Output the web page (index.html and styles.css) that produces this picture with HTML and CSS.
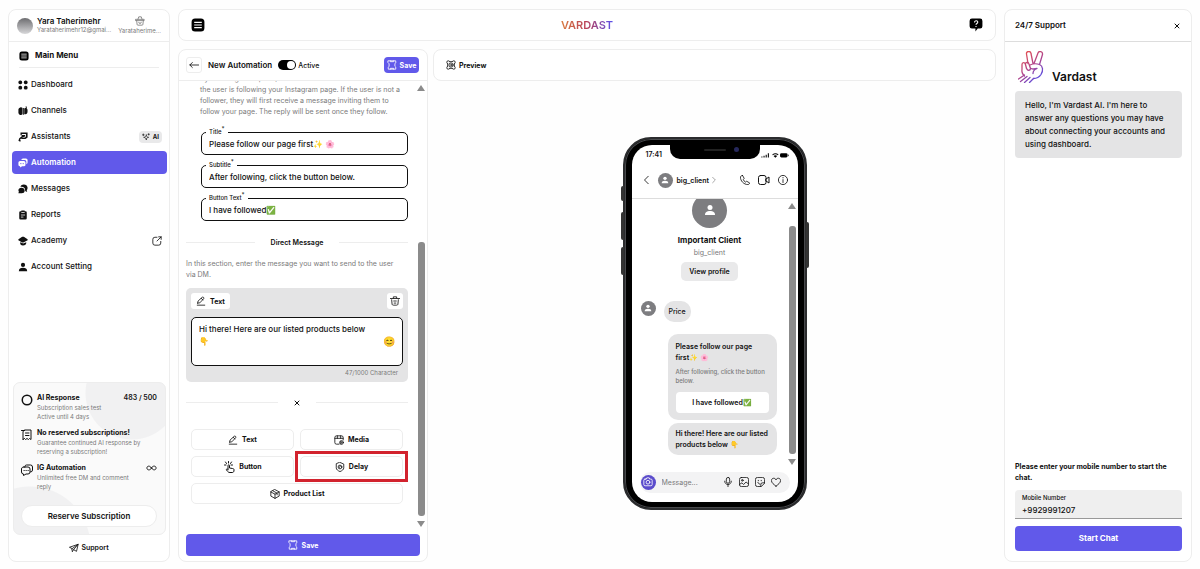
FILE: index.html
```html
<!DOCTYPE html>
<html lang="en">
<head>
  <meta charset="UTF-8">
  <meta name="viewport" content="width=device-width, initial-scale=1">
  <title>Vardast - New Automation</title>
  <link rel="stylesheet" href="styles.css">
</head>
<body>
  <!-- icons used more than once -->
  <svg class="sprite" aria-hidden="true">
    <symbol id="i-menu" viewBox="0 0 24 24"><rect x="1" y="1" width="22" height="22" rx="6" fill="#000"/><path d="M5.500 7.500h13M5.500 12h13M5.500 16.500h13" stroke="#fff" stroke-width="1.800"/></symbol>
    <symbol id="i-pen" viewBox="0 0 24 24"><path d="M4 17l1-5L15 3c2-1.500 5 1 3.500 3.500L9 16.500 4 17zM12.500 5.500l4 4M3 22h18" /></symbol>
    <symbol id="i-save" viewBox="0 0 24 24"><path d="M3 2h18v5l-2 2v6l2 2v5H3v-5l2-2V9L3 7zM8 2v2h8V2M8 22v-2h8v2"/></symbol>
    <symbol id="i-user" viewBox="0 0 24 24"><circle cx="12" cy="7" r="5"/><path d="M2 22c0-6 4-8 10-8s10 2 10 8z"/></symbol>
    <symbol id="i-close" viewBox="0 0 24 24"><path d="M4 4l16 16M20 4L4 20"/></symbol>
    <symbol id="i-chats" viewBox="0 0 24 24"><path d="M8 6V5a3 3 0 013-3h8a4 4 0 014 4v6a4 4 0 01-4 4M6 6h8a4 4 0 014 4v6a4 4 0 01-4 4h-4l-5 3v-3a4 4 0 01-4-4v-6a4 4 0 015-4zM6 13h.5M10 13h.5M14 13h.5"/></symbol>
  </svg>

  <div class="app">
    <aside class="panel sidebar">
      <header class="account">
        <span class="account-photo"></span>
        <div class="account-info">
          <strong>Yara Taherimehr</strong>
          <span>Yarataherimehr12@gmai...</span>
        </div>
        <div class="account-shop">
          <svg class="icon s10" viewBox="0 0 24 24"><path d="M2 8h20v3H2zM4 11l1 9a2 2 0 002 2h10a2 2 0 002-2l1-9M7 8l2-6h6l2 6M9 15a3 3 0 006 0"/></svg>
          <span>Yarataherime...</span>
        </div>
      </header>

      <h2 class="menu-title"><svg class="s10"><use href="#i-menu"/></svg>Main Menu</h2>

      <nav class="menu">
        <a href="#"><svg class="solid s10" viewBox="0 0 24 24"><rect x="1" y="1" width="9" height="9" rx="4"/><rect x="14" y="1" width="9" height="9" rx="4"/><rect x="1" y="14" width="9" height="9" rx="4"/><rect x="14" y="14" width="9" height="9" rx="4"/></svg>Dashboard</a>
        <a href="#"><svg class="solid s10" viewBox="0 0 24 24"><path d="M1 8a6 6 0 0110-3v15a6 6 0 01-10-3zM12 5h2v16h-2zM15 8a3 3 0 014-3l-1-4h3v5c2 1 2 3 2 6 0 5-2 8-5 8h-3z"/></svg>Channels</a>
        <a href="#"><svg class="solid s10" viewBox="0 0 24 24"><path d="M6 1h17v12l-5 4H8v-3l9-1 2-2V5H9v3H6zM9 7h8v4l-7 2-5 5 2 4-3 1-3-2 2-6 6-5z"/></svg>Assistants
          <span class="ai-tag"><svg class="icon s8" viewBox="0 0 24 24"><path d="M13 6c0 4 1 6 7 7-6 1-7 3-7 8-1-5-2-7-8-8 6-1 8-3 8-7zM4 3v5M1.500 5.500h5M20 2v4M18 4h4"/></svg>AI</span></a>
        <a href="#" class="active"><svg class="solid s10" viewBox="0 0 24 24"><path d="M8 5a4 4 0 014-4h7a4 4 0 014 4v6a4 4 0 01-3 4V9a4 4 0 00-4-4z"/><path d="M5 7h9a4 4 0 014 4v5a4 4 0 01-4 4h-4l-5 3v-3a4 4 0 01-4-4v-5a4 4 0 014-4z"/><path d="M5 13.500h2M8.500 13.500h2M12 13.500h2" stroke="#6159ea" stroke-width="2"/></svg>Automation</a>
        <a href="#"><svg class="solid s10" viewBox="0 0 24 24"><path d="M8 3c5-4 15-2 15 6 0 3-1 5-2 6l1 4-5-2c1-7-3-11-11-10 0-2 1-3 2-4z"/><path d="M8 9c5 0 8 3 8 7s-3 6-7 6H1l1-4c-3-4 1-9 6-9z"/></svg>Messages</a>
        <a href="#"><svg class="solid s10" viewBox="0 0 24 24"><path d="M8 1h8v2h2a3 3 0 013 3v14a3 3 0 01-3 3H6a3 3 0 01-3-3V6a3 3 0 013-3h2z"/><path d="M8 6h8M7 12h10M7 17h6" stroke="#fff" stroke-width="1.800"/></svg>Reports</a>
        <a href="#"><svg class="solid s10" viewBox="0 0 24 24"><path d="M10 2h4l8 5c2 1 2 3 0 4l-8 4c-2 1-3 1-5 0L2 11C0 10 0 8 2 7z"/><path d="M5 15l5 2c2 1 3 1 5 0l5-2c0 5-3 8-8 8s-7-3-7-8z"/></svg>Academy
          <svg class="icon s10 external" viewBox="0 0 24 24"><path d="M12 3H7a5 5 0 00-5 5v9a5 5 0 005 5h9a5 5 0 005-5v-4M12 12L22 2M16 2h6v6"/></svg></a>
        <a href="#"><svg class="solid s10"><use href="#i-user"/></svg>Account Setting</a>
      </nav>

      <section class="plan">
        <ul>
          <li>
            <svg class="icon ring s12" viewBox="0 0 24 24"><circle cx="12" cy="12" r="9.500"/></svg>
            <div><h3>AI Response <b>483 / 500</b></h3><p>Subscription sales test<br>Active until 4 days</p></div>
          </li>
          <li>
            <svg class="icon s12" viewBox="0 0 24 24"><path d="M4 21V6a4 4 0 014-4h12v19l-3-2-2 2-3-2-3 2-2-2zM9 8h7M9 13h7M1 3h6"/></svg>
            <div><h3>No reserved subscriptions!</h3><p>Guarantee continued AI response by<br>reserving a subscription!</p></div>
          </li>
          <li>
            <svg class="icon s12"><use href="#i-chats"/></svg>
            <div><h3>IG Automation
              <svg class="icon infinity" viewBox="0 0 24 12"><path d="M12 6c-3-6-10-5-10 0s7 6 10 0 10-5 10 0-7 6-10 0z"/></svg></h3><p>Unlimited free DM and comment<br>reply</p></div>
          </li>
        </ul>
        <button type="button" class="reserve">Reserve Subscription</button>
      </section>

      <a href="#" class="support-link"><svg class="icon s10" viewBox="0 0 24 24"><path d="M2 10L22 3l-4 17-7-4-3 5-1-7zM7 14L22 3 11 16"/></svg>Support</a>
    </aside>

    <main class="workspace">
      <header class="panel topbar">
        <button type="button" class="plain" aria-label="Menu"><svg class="s14"><use href="#i-menu"/></svg></button>
        <h1 class="brand">VARDAST</h1>
        <button type="button" class="plain" aria-label="Help">
          <svg class="s14" viewBox="0 0 24 24"><path d="M5 1h14a4 4 0 014 4v9a4 4 0 01-4 4h-4l-4 5v-5H5a4 4 0 01-4-4V5a4 4 0 014-4z"/><path d="M9.500 7.500c0-4 6-3.500 5.500 0-.3 2-3 1.800-3 4M12 13.500v1.800" fill="none" stroke="#fff" stroke-width="1.800"/></svg>
        </button>
      </header>

      <section class="panel editor">
        <header class="editor-head">
          <button type="button" class="back" aria-label="Back"><svg class="icon s10" viewBox="0 0 24 24"><path d="M23 12H2M8 6l-6 6 6 6"/></svg></button>
          <h2>New Automation</h2>
          <label class="switch"><input type="checkbox" checked><span></span>Active</label>
          <button type="button" class="primary save-small"><svg class="icon s10"><use href="#i-save"/></svg>Save</button>
        </header>

        <div class="editor-scroll">
          <div class="editor-content">
            <div class="follow">
              <p class="hint">By enabling this option, Vardast will check if<br>the user is following your Instagram page. If the user is not a<br>follower, they will first receive a message inviting them to<br>follow your page. The reply will be sent once they follow.</p>
              <div class="field"><label for="title">Title<sup>*</sup></label><input id="title" type="text" value="Please follow our page first✨ 🌸"></div>
              <div class="field"><label for="subtitle">Subtitle<sup>*</sup></label><input id="subtitle" type="text" value="After following, click the button below."></div>
              <div class="field"><label for="button-text">Button Text<sup>*</sup></label><input id="button-text" type="text" value="I have followed✅"></div>
            </div>

            <h3 class="divider">Direct Message</h3>
            <p class="hint">In this section, enter the message you want to send to the user<br>via DM.</p>

            <div class="message">
              <div class="message-head">
                <span class="tag"><svg class="icon s10"><use href="#i-pen"/></svg>Text</span>
                <button type="button" class="tag delete" aria-label="Delete"><svg class="icon s10" viewBox="0 0 24 24"><path d="M1 6h22M8 5V2h8v3M4 9l1 11a3 3 0 003 2h8a3 3 0 003-2l1-11M9 12h6M10 17h4"/></svg></button>
              </div>
              <div class="message-box">
                <textarea aria-label="Message text">Hi there! Here are our listed products below 👇</textarea>
                <button type="button" class="plain emoji" aria-label="Emoji">😊</button>
              </div>
              <p class="counter">47/1000 Character</p>
            </div>

            <div class="divider"><button type="button" class="plain" aria-label="Close"><svg class="icon bold s6"><use href="#i-close"/></svg></button></div>

            <div class="blocks">
              <button type="button"><svg class="icon s10"><use href="#i-pen"/></svg>Text</button>
              <button type="button"><svg class="icon s10" viewBox="0 0 24 24"><path d="M12 22H6a4 4 0 01-4-4V6a4 4 0 014-4h12a4 4 0 014 4v6M2 8h20M8 2v6M16 2v6"/><circle cx="18" cy="18" r="4.500"/><path d="M17 16l3 2-3 2z"/></svg>Media</button>
              <button type="button"><svg class="icon s12" viewBox="0 0 24 24"><path d="M10 17V9c0-2 3-2 3 0v5l6 1c2 0 3 1 3 3 0 3-1 5-3 5h-5c-3 0-4-1-7-5-1-2 1-3 3-1M11 1v3M3 8h3M5 2l2 3M17 2l-2 3M16 8h3"/></svg>Button</button>
              <button type="button" class="highlight"><svg class="icon s10" viewBox="0 0 24 24"><path d="M12 1l9 4v9c0 4-4 7-9 9-5-2-9-5-9-9V5z"/><circle cx="12" cy="12" r="4.500"/><path d="M12 10v2l-1 1"/></svg>Delay</button>
              <button type="button" class="wide"><svg class="icon s10" viewBox="0 0 24 24"><path d="M12 1.500l10 5.500v10l-10 5.500L2 17V7zM2 7l10 5.500L22 7M12 12.500v10M7 4.500l10 5.500v4"/></svg>Product List</button>
            </div>
          </div>
          <div class="scrollbar"><i class="up"></i><span></span><i class="down"></i></div>
        </div>

        <button type="button" class="primary save-wide"><svg class="icon s10"><use href="#i-save"/></svg>Save</button>
      </section>

      <section class="preview">
        <header class="panel preview-head">
          <svg class="icon s10" viewBox="0 0 24 24"><circle cx="12" cy="12" r="5"/><circle cx="12" cy="12" r="1"/><path d="M9 4C8 2 7 2 5 2a3 3 0 00-3 3c0 2 0 3 2 4M15 4c1-2 2-2 4-2a3 3 0 013 3c0 2 0 3-2 4M9 20c-1 2-2 2-4 2a3 3 0 01-3-3c0-2 0-3 2-4M15 20c1 2 2 2 4 2a3 3 0 003-3c0-2 0-3-2-4M4 9v6M20 9v6M9 4h6M9 20h6"/></svg>
          Preview
        </header>
        <div class="stage">
          <div class="phone">
            <i class="key key-1"></i><i class="key key-2"></i><i class="key key-3"></i><i class="key key-4"></i>
            <div class="notch"><span></span><i></i></div>
            <div class="screen">
              <div class="status">
                <time>17:41</time>
                <svg viewBox="0 0 78 20"><path d="M1 17v-3h3v3zM7 17v-5h3v5zM13 17V9h3v8zM19 17V5h3v12zM31 9c6-5 13-5 18 0l-2 2c-4-4-10-4-14 0zM35 13c3-3 7-3 10 0l-5 5z"/><rect x="53" y="5" width="21" height="12" rx="4"/><path d="M75 8c3 1 3 5 0 6z"/></svg>
              </div>
              <div class="chat-head">
                <svg class="icon s10" viewBox="0 0 24 24"><path d="M15 3l-9 9 9 9"/></svg>
                <span class="avatar"><svg class="s8"><use href="#i-user"/></svg></span>
                <strong>big_client</strong>
                <svg class="icon thin s8" viewBox="0 0 24 24"><path d="M8 4l8 8-8 8"/></svg>
                <div class="chat-actions">
                  <svg class="icon s10" viewBox="0 0 24 24"><path d="M6 1l4 7-2 3c1 3 3 5 5 6l3-2 7 4c0 2-2 4-4 4C9 23 1 14 1 5c0-2 3-4 5-4z"/></svg>
                  <svg class="icon s12" viewBox="0 0 24 24"><rect x="1" y="3" width="15" height="18" rx="4"/><path d="M16 10l6-4v12l-6-4z"/></svg>
                  <svg class="icon s10" viewBox="0 0 24 24"><circle cx="12" cy="12" r="11"/><path d="M12 6v1M12 11v7"/></svg>
                </div>
              </div>
              <div class="chat">
                <div class="chat-body">
                  <div class="profile">
                    <span class="avatar big"><svg class="s12"><use href="#i-user"/></svg></span>
                    <strong>Important Client</strong>
                    <span>big_client</span>
                    <button type="button">View profile</button>
                  </div>
                  <div class="incoming"><span class="avatar"><svg class="s8"><use href="#i-user"/></svg></span><p class="bubble">Price</p></div>
                  <div class="outgoing">
                    <div class="bubble">
                      <b>Please follow our page first✨ 🌸</b>
                      <small>After following, click the button below.</small>
                      <button type="button">I have followed✅</button>
                    </div>
                    <div class="bubble"><b>Hi there! Here are our listed products below 👇</b></div>
                  </div>
                </div>
                <div class="scrollbar"><i class="up"></i><span></span><i class="down"></i></div>
              </div>
              <div class="composer">
                <span class="camera"><svg class="icon s10" viewBox="0 0 24 24"><path d="M5 5h3l1-3h6l1 3h3a3 3 0 013 3v10a3 3 0 01-3 3H5a3 3 0 01-3-3V8a3 3 0 013-3z"/><circle cx="12" cy="12.500" r="4.500"/></svg></span>
                <input type="text" placeholder="Message..." aria-label="Message">
                <svg class="icon s10" viewBox="0 0 24 24"><rect x="8" y="1" width="8" height="14" rx="4"/><path d="M4 10c0 11 16 11 16 0M12 18v5"/></svg>
                <svg class="icon s10" viewBox="0 0 24 24"><rect x="1" y="1" width="22" height="22" rx="5"/><circle cx="8" cy="8" r="2"/><path d="M1 18l6-4 4 4 6-6 6 5"/></svg>
                <svg class="icon s10" viewBox="0 0 24 24"><path d="M14 23H6a5 5 0 01-5-5V6a5 5 0 015-5h12a5 5 0 015 5v8zM14 23v-5a4 4 0 014-4h5M7 13c1 3 3 4 5 4M8 8v1M15 8v1"/></svg>
                <svg class="icon s10" viewBox="0 0 24 24"><path d="M12 22C7 18 1 14 1 8.500 1 2 10 1 12 7c2-6 11-5 11 1.500 0 5.500-6 9.500-11 13.500z"/></svg>
              </div>
            </div>
          </div>
        </div>
      </section>
    </main>

    <aside class="panel support">
      <header><h2>24/7 Support</h2><button type="button" class="plain" aria-label="Close"><svg class="icon bold s6"><use href="#i-close"/></svg></button></header>
      <div class="bot">
        <svg viewBox="0 0 52 64">
          <defs><linearGradient id="hand" gradientUnits="userSpaceOnUse" x1="4" y1="8" x2="48" y2="56"><stop offset="0" stop-color="#e8504a"/><stop offset=".5" stop-color="#b0448c"/><stop offset="1" stop-color="#4a4ff0"/></linearGradient></defs>
          <g fill="none" stroke="url(#hand)" stroke-width="2.600" stroke-linecap="round" stroke-linejoin="round">
            <path d="M20 25L17 6c-1-6 8-7 9-1l4 20M32 25l8-21c2-5 10-3 9 3l-6 20"/>
            <path d="M13 50C8 46 7 42 8 36v-9c0-5 6-5 7 0l2 8M15 27c-1-5 6-6 7-1l3 9c0 4-6 5-7 1"/>
            <path d="M24 28c5-3 14-3 19-1 7 3 8 12 3 20-4 6-9 8-15 8M26 35c4 2 8 1 12 0-5 2-8 5-8 10"/>
            <path d="M13 48L1 56M18 51L5 61M24 53L13 63M31 55l-8 8"/>
          </g>
        </svg>
        <strong>Vardast</strong>
      </div>
      <p class="greeting">Hello, I'm Vardast AI. I'm here to answer any questions you may have about connecting your accounts and using dashboard.</p>
      <form class="phone-form">
        <p>Please enter your mobile number to start the chat.</p>
        <div class="mobile"><label for="mobile">Mobile Number</label><input id="mobile" type="tel" value="+9929991207"></div>
        <button type="button" class="primary">Start Chat</button>
      </form>
    </aside>
  </div>
</body>
</html>
```

FILE: styles.css
```css
* {
  box-sizing: border-box;
}
:root {
  --primary: #6159ea;
  --line: #ededed;
  --muted: #7a7a7a;
  --bubble: #e4e4e5;
}
body {
  margin: 0;
  background: #fefefe;
  color: #111;
  font-family: Inter, "Liberation Sans", sans-serif;
  font-size: 8px;
  line-height: 11px;
}
h1, h2, h3, p, ul {
  margin: 0;
  padding: 0;
}
h2, h3, strong, b {
  font-weight: 600;
}
ul {
  list-style: none;
}
a {
  color: inherit;
  text-decoration: none;
}
button, input, textarea {
  font: inherit;
  color: inherit;
  margin: 0;
}
button {
  display: flex;
  align-items: center;
  justify-content: center;
  gap: 4px;
  padding: 0;
  border: none;
  background: #fff;
  font-weight: 600;
  cursor: pointer;
}
svg {
  flex: none;
  display: block;
}
.sprite {
  position: absolute;
  width: 0;
  height: 0;
}
.icon {
  fill: none;
  stroke: currentColor;
  stroke-width: 2;
  stroke-linecap: round;
  stroke-linejoin: round;
}
.bold {
  stroke-width: 4;
}
.solid {
  fill: currentColor;
}
.s6 { width: 6px; height: 6px; }
.s8 { width: 8px; height: 8px; }
.s10 { width: 10px; height: 10px; }
.s12 { width: 12px; height: 12px; }
.s14 { width: 14px; height: 14px; }
.plain {
  background: none;
}
.primary {
  background: var(--primary);
  color: #fff;
  border-radius: 4px;
}

/* page frame */
.app {
  display: grid;
  grid-template-columns: 162px 1fr 188px;
  gap: 8px;
  height: 100vh;
  padding: 9px 8px 7px;
}
.panel {
  background: #fff;
  border: 1px solid var(--line);
  border-radius: 8px;
}
.workspace {
  display: grid;
  grid-template-columns: 250px 1fr;
  grid-template-rows: 32px 1fr;
  gap: 8px 5px;
  min-height: 0;
}

/* sidebar */
.sidebar {
  display: flex;
  flex-direction: column;
}
.account {
  display: flex;
  align-items: center;
  gap: 4px;
  height: 32px;
  padding: 0 8px;
  border-bottom: 1px solid var(--line);
}
.account-photo {
  flex: none;
  width: 16px;
  height: 16px;
  border-radius: 50%;
  background: linear-gradient(#6d6d70, #d8d8da);
}
.account-info, .account-shop {
  display: flex;
  flex-direction: column;
  font-size: 6px;
  line-height: 8px;
  color: var(--muted);
}
.account-info strong {
  font-size: 8px;
  line-height: 9px;
  color: #111;
}
.account-shop {
  align-items: center;
  gap: 1px;
  margin-left: auto;
}
.menu-title {
  display: flex;
  align-items: center;
  gap: 6px;
  height: 26px;
  margin: 0 10px;
  padding-top: 2px;
  font-size: 8px;
  font-weight: 700;
  border-bottom: 1px solid var(--line);
}
.menu {
  display: flex;
  flex-direction: column;
  gap: 3px;
  margin: 5px 2px 0 3px;
}
.menu a {
  display: flex;
  align-items: center;
  gap: 3px;
  height: 23px;
  padding: 0 5px 0 6px;
  border-radius: 4px;
  font-weight: 500;
}
.menu .active {
  background: var(--primary);
  color: #fff;
  font-weight: 600;
}
.ai-tag {
  display: flex;
  align-items: center;
  gap: 3px;
  margin-left: auto;
  padding: 0 3px;
  border-radius: 4px;
  background: #e9e9ea;
  font-size: 6px;
  line-height: 12px;
  font-weight: 700;
}
.external {
  margin-left: auto;
}
.plan {
  margin: auto 3px 7px 4px;
  padding: 9px 8px 7px 7px;
  border: 1px solid var(--line);
  border-radius: 7px;
  background:
    radial-gradient(circle at 118px 10px, #f1f1f2 46px, transparent 47px),
    radial-gradient(circle at 16px 164px, #f1f1f2 60px, transparent 61px),
    #fafafa;
}
.plan ul {
  display: flex;
  flex-direction: column;
  gap: 6px;
  margin-bottom: 14px;
}
.plan li {
  display: flex;
  gap: 4px;
}
.plan li > svg {
  margin-top: 2px;
}
.plan li > div {
  flex: 1;
}
.plan h3 {
  display: flex;
  justify-content: space-between;
  align-items: center;
  font-size: 7px;
  font-weight: 700;
}
.plan p {
  font-size: 6px;
  line-height: 9px;
  color: var(--muted);
}
.ring {
  stroke-width: 3;
}
.infinity {
  width: 11px;
  height: 6px;
}
.reserve {
  width: 100%;
  height: 22px;
  border: 1px solid var(--line);
  border-radius: 11px;
}
.support-link {
  display: flex;
  align-items: center;
  justify-content: center;
  gap: 2px;
  margin-bottom: 8px;
  font-size: 7px;
  font-weight: 600;
}

/* top bar */
.topbar {
  grid-column: 1 / -1;
  display: flex;
  align-items: center;
  justify-content: space-between;
  padding: 0 12px;
}
.brand {
  font-size: 11px;
  font-weight: 600;
  background: linear-gradient(90deg, #d97b3f, #b8405a 50%, #5850ee);
  -webkit-background-clip: text;
  background-clip: text;
  color: transparent;
}

/* automation editor */
.editor {
  display: flex;
  flex-direction: column;
  min-height: 0;
}
.editor-head {
  display: flex;
  align-items: center;
  gap: 6px;
  height: 31px;
  padding: 0 8px 0 7px;
  border-bottom: 1px solid var(--line);
}
.editor-head h2 {
  font-size: 8px;
}
.back {
  width: 16px;
  height: 16px;
  border: 1px solid var(--line);
  border-radius: 3px;
}
.switch {
  display: flex;
  align-items: center;
  gap: 2px;
  font-size: 7px;
  font-weight: 500;
}
.switch input {
  position: absolute;
  opacity: 0;
}
.switch span {
  width: 18px;
  height: 10px;
  padding: 1px;
  border-radius: 5px;
  background: #bbb;
}
.switch span::after {
  content: "";
  display: block;
  width: 8px;
  height: 8px;
  border-radius: 50%;
  background: #fff;
}
.switch input:checked + span {
  background: #000;
}
.switch input:checked + span::after {
  margin-left: auto;
}
.save-small {
  width: 35px;
  height: 16px;
  margin-left: auto;
  gap: 3px;
  font-size: 7px;
  font-weight: 700;
}
.editor-scroll {
  flex: 1;
  display: flex;
  min-height: 0;
  overflow: hidden;
}
.editor-content {
  flex: 1;
  padding-left: 7px;
  margin-top: -8px;
}
.hint {
  font-size: 7px;
  color: var(--muted);
}
.follow {
  display: flex;
  flex-direction: column;
  gap: 10px;
  padding: 0 0 1px 14px;
}
.follow .hint {
  margin-bottom: 5px;
}
.field {
  position: relative;
  margin-left: 1px;
}
.field label {
  position: absolute;
  top: -5px;
  left: 5px;
  padding: 0 3px;
  background: #fff;
  font-size: 6px;
  line-height: 9px;
  font-weight: 500;
}
.field sup {
  line-height: 0;
  font-size: 6px;
}
.field input {
  display: block;
  width: 100%;
  height: 23px;
  padding: 0 7px;
  border: 1px solid #111;
  border-radius: 5px;
  background: none;
  font-weight: 500;
}
.divider {
  display: flex;
  align-items: center;
  gap: 16px;
  height: 11px;
  margin: 15px 0 10px;
  font-size: 7px;
}
.divider::before, .divider::after {
  content: "";
  flex: 1;
  border-top: 1px solid var(--line);
}
.message {
  margin-top: 8px;
  padding: 5px 5px 4px;
  border-radius: 5px;
  background: var(--bubble);
}
.message-head {
  display: flex;
  justify-content: space-between;
}
.tag {
  display: flex;
  align-items: center;
  gap: 4px;
  height: 16px;
  padding: 0 5px;
  border-radius: 3px;
  background: #fff;
  font-size: 7px;
  font-weight: 700;
}
.delete {
  padding: 0 3px;
}
.message-box {
  position: relative;
  margin: 8px 0 1px;
}
.message-box textarea {
  display: block;
  width: 100%;
  height: 49px;
  padding: 5px 32px 5px 7px;
  border: 1px solid #111;
  border-radius: 5px;
  background: #fff;
  line-height: 12px;
  font-weight: 500;
  resize: none;
  overflow: hidden;
}
.emoji {
  position: absolute;
  right: 8px;
  top: 19px;
  font-size: 10px;
}
.counter {
  padding-right: 5px;
  text-align: right;
  font-size: 6px;
  color: var(--muted);
}
.blocks {
  display: grid;
  grid-template-columns: 1fr 1fr;
  gap: 6px;
  padding: 11px 5px 0;
}
.blocks button {
  position: relative;
  height: 21px;
  border: 1px solid var(--line);
  border-radius: 5px;
  font-size: 7px;
  font-weight: 700;
}
.blocks .wide {
  grid-column: 1 / -1;
}
.blocks .highlight::after {
  content: "";
  position: absolute;
  inset: -6px;
  border: 3px solid #d2232e;
}
.save-wide {
  height: 22px;
  margin: 5px 7px;
  font-size: 7px;
  font-weight: 700;
}
.scrollbar {
  flex: none;
  display: flex;
  flex-direction: column;
  align-items: center;
  width: 7px;
}
.scrollbar i {
  border: 4px solid transparent;
}
.scrollbar .up {
  border-top: 0;
  border-bottom: 6px solid #8b8b8b;
}
.scrollbar .down {
  border-bottom: 0;
  border-top: 6px solid #8b8b8b;
}
.scrollbar span {
  width: 7px;
  border-radius: 3px;
  background: #8b8b8b;
}
.editor .scrollbar {
  width: 8px;
  margin: 4px 2px 2px 9px;
}
.editor .scrollbar span {
  flex: 1;
  margin: 151px 0 5px;
}

/* preview */
.preview {
  display: flex;
  flex-direction: column;
  min-height: 0;
}
.preview-head {
  display: flex;
  align-items: center;
  gap: 3px;
  height: 32px;
  padding: 0 12px;
  font-size: 7px;
  font-weight: 700;
}
.stage {
  flex: 1;
  display: flex;
  align-items: center;
  justify-content: center;
  padding-top: 3px;
}
.phone {
  position: relative;
  width: 184px;
  height: 373px;
  padding: 6px 7px;
  border: 2px solid #2b2c2e;
  border-radius: 28px;
  background: #000;
  box-shadow: inset 0 0 0 1px #48494c;
}
.key {
  position: absolute;
  left: -4px;
  width: 3px;
  border-radius: 2px 0 0 2px;
  background: #333;
}
.key-1 { top: 47px; height: 15px; }
.key-2 { top: 73px; height: 28px; }
.key-3 { top: 108px; height: 28px; }
.key-4 {
  left: auto;
  right: -4px;
  top: 83px;
  height: 46px;
  border-radius: 0 2px 2px 0;
}
.notch {
  position: absolute;
  top: 2px;
  left: 50%;
  display: flex;
  align-items: center;
  gap: 8px;
  width: 90px;
  height: 18px;
  padding: 0 0 0 34px;
  margin-left: -45px;
  border-radius: 0 0 10px 10px;
  background: #000;
}
.notch span {
  width: 22px;
  height: 2px;
  border-radius: 1px;
  background: #222;
}
.notch i {
  width: 5px;
  height: 5px;
  border-radius: 50%;
  background: #26285c;
}
.screen {
  display: flex;
  flex-direction: column;
  height: 100%;
  border-radius: 20px;
  background: #fff;
  overflow: hidden;
}
.status {
  display: flex;
  align-items: center;
  justify-content: space-between;
  height: 18px;
  padding: 2px 9px 0 14px;
  font-size: 7px;
  font-weight: 600;
}
.status svg {
  width: 28px;
  height: 8px;
}
.chat-head {
  display: flex;
  align-items: center;
  gap: 4px;
  height: 36px;
  padding: 0 10px;
  border-bottom: 1px solid #ddd;
}
.chat-head strong {
  font-size: 7px;
}
.chat-head .avatar {
  margin-left: 2px;
}
.thin {
  color: var(--muted);
  margin-left: -3px;
}
.chat-actions {
  display: flex;
  align-items: center;
  gap: 8px;
  margin-left: auto;
}
.avatar {
  flex: none;
  display: flex;
  align-items: center;
  justify-content: center;
  width: 15px;
  height: 15px;
  border-radius: 50%;
  background: #7d7d80;
  fill: #fff;
}
.avatar.big {
  width: 35px;
  height: 35px;
}
.chat {
  flex: 1;
  display: flex;
  min-height: 0;
  overflow: hidden;
}
.chat-body {
  flex: 1;
  padding: 0 10px 0 9px;
  margin-top: -6px;
}
.profile {
  display: flex;
  flex-direction: column;
  align-items: center;
  font-size: 7px;
  color: var(--muted);
}
.profile strong {
  margin-top: 6px;
  font-size: 8px;
  line-height: 13px;
  font-weight: 700;
  color: #111;
}
.profile button {
  width: 57px;
  height: 19px;
  margin: 4px 0 20px;
  border-radius: 5px;
  background: #e9e9ea;
  font-size: 7px;
  color: #111;
}
.incoming {
  display: flex;
  gap: 8px;
}
.bubble {
  border-radius: 10px;
  background: var(--bubble);
  font-size: 7px;
  font-weight: 500;
}
.incoming .bubble {
  padding: 5px;
}
.outgoing {
  display: flex;
  flex-direction: column;
  gap: 3px;
  margin: 12px 2px 0 27px;
}
.outgoing .bubble {
  padding: 7px 8px;
}
.outgoing .bubble + .bubble {
  padding: 5px 6px 5px 8px;
}
.outgoing b {
  display: block;
}
.outgoing small {
  display: block;
  margin: 4px 0 7px;
  font-size: 6px;
  line-height: 9px;
  color: var(--muted);
}
.outgoing button {
  width: 100%;
  height: 21px;
  border-radius: 4px;
}
.chat .scrollbar {
  margin: 4px 2px 7px 0;
}
.chat .scrollbar span {
  flex: 1;
  margin: 17px 0 5px;
}
.composer {
  display: flex;
  align-items: center;
  gap: 6px;
  height: 21px;
  margin: 0 8px 9px 8px;
  padding: 0 9px 0 1px;
  border-radius: 11px;
  background: #f3f3f4;
}
.composer input {
  flex: 1;
  min-width: 0;
  padding: 0;
  border: none;
  background: none;
  font-size: 7px;
}
.composer input::placeholder {
  color: var(--muted);
}
.camera {
  display: flex;
  align-items: center;
  justify-content: center;
  width: 15px;
  height: 15px;
  border-radius: 50%;
  background: #5b4ccc;
  color: #fff;
}

/* support chat */
.support {
  display: flex;
  flex-direction: column;
}
.support header {
  display: flex;
  align-items: center;
  justify-content: space-between;
  height: 32px;
  padding: 0 11px 0 10px;
  border-bottom: 1px solid #ddd;
}
.support h2 {
  font-size: 8px;
}
.bot {
  display: flex;
  align-items: flex-end;
  gap: 8px;
  margin: 9px 13px 8px;
}
.bot svg {
  width: 26px;
  height: 32px;
}
.bot strong {
  font-size: 12px;
  line-height: 13px;
}
.greeting {
  margin: 0 9px 0 10px;
  padding: 8px 10px 7px;
  border-radius: 4px;
  background: var(--bubble);
  line-height: 13px;
  font-weight: 500;
}
.phone-form {
  margin: auto 9px 10px 10px;
}
.phone-form p {
  font-size: 7px;
  font-weight: 700;
}
.mobile {
  display: flex;
  flex-direction: column;
  margin: 7px 0;
  padding: 2px 7px 1px;
  border-bottom: 1px solid #999;
  border-radius: 4px 4px 0 0;
  background: #efefef;
}
.mobile label {
  font-size: 6px;
  font-weight: 500;
}
.mobile input {
  width: 100%;
  padding: 0;
  border: none;
  background: none;
  line-height: 14px;
  font-weight: 500;
}
.phone-form button {
  width: 100%;
  height: 25px;
  font-weight: 700;
}
```
